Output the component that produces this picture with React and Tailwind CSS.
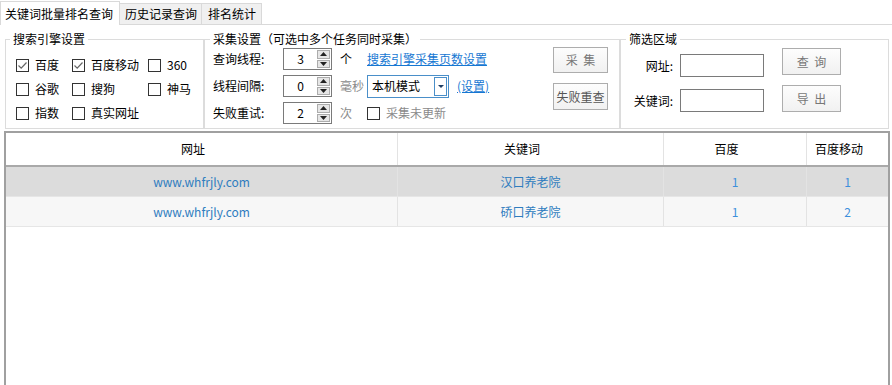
import React from 'react';

const font = { fontFamily: '"Noto Sans CJK SC", "Noto Sans", sans-serif' };

function Check({ checked }) {
  return (
    <span className="w-[13px] h-[13px] border border-[#333] bg-white flex items-center justify-center shrink-0">
      {checked && (
        <svg width="11" height="11" viewBox="0 0 11 11">
          <polyline points="1.5,5.5 4.2,8.2 9.5,2.5" fill="none" stroke="#666" strokeWidth="1.2" />
        </svg>
      )}
    </span>
  );
}

function Spinner({ value }) {
  return (
    <div className="w-[49px] h-[22px] border border-[#7a7a7a] bg-white flex">
      <div className="flex-1 flex items-center justify-center text-[12px] text-black">{value}</div>
      <div className="w-[14px] flex flex-col gap-px py-px pr-px">
        <div className="flex-1 bg-[#e6e6e6] border border-[#acacac] flex items-center justify-center">
          <svg width="7" height="4" viewBox="0 0 7 4"><polygon points="0,4 3.5,0 7,4" fill="#222" /></svg>
        </div>
        <div className="flex-1 bg-[#e6e6e6] border border-[#acacac] flex items-center justify-center">
          <svg width="7" height="4" viewBox="0 0 7 4"><polygon points="0,0 3.5,4 7,0" fill="#222" /></svg>
        </div>
      </div>
    </div>
  );
}

function Btn({ children, w, h }) {
  return (
    <button className={`${w} ${h} border border-[#adadad] bg-gradient-to-b from-[#fdfdfd] to-[#f1f1f1] text-[12px] text-[#777] flex items-center justify-center`}>
      {children}
    </button>
  );
}

const engines = [
  ['百度', true], ['百度移动', true], ['360', false],
  ['谷歌', false], ['搜狗', false], ['神马', false],
  ['指数', false], ['真实网址', false],
];

const rows = [
  { url: 'www.whfrjly.com', kw: '汉口养老院', bd: '1', m: '1', bg: 'bg-[#dcdcdc]' },
  { url: 'www.whfrjly.com', kw: '硚口养老院', bd: '1', m: '2', bg: 'bg-[#f7f7f7]' },
];

export default function App() {
  return (
    <div className="w-[892px] h-[385px] bg-white overflow-hidden text-[12px] leading-[16px] text-black" style={font}>
      {/* tabs */}
      <div className="flex items-end h-[25px] border-b border-[#d9d9d9]">
        <div className="w-[120px] h-[24px] -mb-px bg-white border border-b-0 border-[#d9d9d9] pl-[4px] flex items-center">关键词批量排名查询</div>
        <div className="w-[82px] h-[21px] bg-[#f0f0f0] border border-b-0 border-l-0 border-[#d9d9d9] pl-[5px] flex items-center">历史记录查询</div>
        <div className="w-[60px] h-[21px] bg-[#f0f0f0] border border-b-0 border-l-0 border-[#d9d9d9] pl-[6px] flex items-center">排名统计</div>
      </div>

      {/* settings */}
      <div className="flex mt-[6px] ml-[5px]">
        <fieldset className="w-[199px] h-[98px] border border-[#dcdcdc] p-0 m-0">
          <legend className="ml-[4px] px-[3px] leading-[16px]">搜索引擎设置</legend>
          <div className="grid grid-cols-[56px_76px_1fr] pl-[10px] pt-[6px]">
            {engines.map(([name, on]) => (
              <div key={name} className="h-[24px] flex items-center gap-[6px]">
                <Check checked={on} />
                <span>{name}</span>
              </div>
            ))}
          </div>
        </fieldset>

        <fieldset className="w-[416px] h-[98px] border border-[#dcdcdc] p-0 m-0">
          <legend className="ml-[5px] px-[3px] leading-[16px]">采集设置（可选中多个任务同时采集）</legend>
          <div className="flex">
            <div className="flex flex-col gap-[5px] pl-[8px] pt-[1px]">
              <div className="flex items-center h-[22px]">
                <span className="w-[70px]">查询线程:</span>
                <Spinner value="3" />
                <span className="w-[35px] pl-[8px]">个</span>
                <span className="text-[#1677d2] underline">搜索引擎采集页数设置</span>
              </div>
              <div className="flex items-center h-[22px]">
                <span className="w-[70px]">线程间隔:</span>
                <Spinner value="0" />
                <span className="w-[35px] pl-[8px] text-[#8a8a8a]">毫秒</span>
                <div className="w-[82px] h-[23px] border border-[#4a8fc9] bg-white flex items-center">
                  <span className="flex-1 pl-[4px]">本机模式</span>
                  <div className="w-[13px] h-[19px] mr-px border border-[#4a8fc9] flex items-center justify-center">
                    <svg width="6" height="3" viewBox="0 0 6 3"><polygon points="0,0 3,3 6,0" fill="#1e3f66" /></svg>
                  </div>
                </div>
                <span className="ml-[8px] text-[#1677d2] underline">(设置)</span>
              </div>
              <div className="flex items-center h-[22px]">
                <span className="w-[70px]">失败重试:</span>
                <Spinner value="2" />
                <span className="w-[35px] pl-[8px] text-[#8a8a8a]">次</span>
                <Check checked={false} />
                <span className="ml-[6px] text-[#8a8a8a]">采集未更新</span>
              </div>
            </div>
            <div className="ml-auto mr-[11px] flex flex-col gap-[10px]">
              <Btn w="w-[55px]" h="h-[26px]">采&nbsp;&nbsp;集</Btn>
              <Btn w="w-[55px]" h="h-[27px]"><span className="text-[#555]">失败重查</span></Btn>
            </div>
          </div>
        </fieldset>

        <fieldset className="w-[269px] h-[98px] border border-[#dcdcdc] p-0 m-0">
          <legend className="ml-[5px] px-[3px] leading-[16px]">筛选区域</legend>
          <div className="flex">
            <div className="flex flex-col gap-[12px] pt-[7px]">
              <div className="flex items-center">
                <span className="w-[52px] text-right">网址:</span>
                <div className="ml-[7px] w-[84px] h-[23px] border border-[#7a7a7a] bg-white" />
              </div>
              <div className="flex items-center">
                <span className="w-[52px] text-right">关键词:</span>
                <div className="ml-[7px] w-[84px] h-[23px] border border-[#7a7a7a] bg-white" />
              </div>
            </div>
            <div className="ml-[18px] pt-[1px] flex flex-col gap-[10px]">
              <Btn w="w-[59px]" h="h-[27px]">查&nbsp;&nbsp;询</Btn>
              <Btn w="w-[59px]" h="h-[27px]">导&nbsp;&nbsp;出</Btn>
            </div>
          </div>
        </fieldset>
      </div>

      {/* table */}
      <div className="ml-[4px] mt-[2px] w-[886px] h-[260px] border-2 border-b-0 border-[#a0a0a0] bg-white">
        <div className="grid grid-cols-[392px_266px_143px_81px] h-[34px] border-b-2 border-[#a9a9a9] bg-white">
          {['网址', '关键词', '百度', '百度移动'].map((h, i) => (
            <div key={h} className={`flex items-center justify-center pr-[17px] ${i < 3 ? 'border-r border-[#e3e3e3]' : ''}`}>{h}</div>
          ))}
        </div>
        {rows.map((r, idx) => (
          <div key={idx} className={`grid grid-cols-[392px_266px_143px_81px] h-[30px] border-b border-[#e6e6e6] ${r.bg}`}>
            <div className="flex items-center justify-center border-r border-[#e3e3e3] text-[#2f7dbf]">{r.url}</div>
            <div className="flex items-center justify-center border-r border-[#e3e3e3] text-[#2f7dbf]">{r.kw}</div>
            <div className="flex items-center justify-center border-r border-[#e3e3e3] text-[#3d8fdc]">{r.bd}</div>
            <div className="flex items-center justify-center text-[#3d8fdc]">{r.m}</div>
          </div>
        ))}
      </div>
    </div>
  );
}
